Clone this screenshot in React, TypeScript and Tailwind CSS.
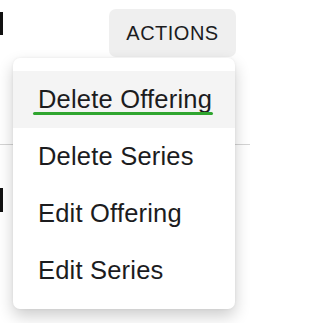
const items = ["Delete Offering", "Delete Series", "Edit Offering", "Edit Series"];

export default function App() {
  return (
    <div
      className="relative w-[250px] h-[323px] overflow-hidden bg-white text-[#1c1c1e]"
      style={{ fontFamily: '"Liberation Sans", Arial, sans-serif' }}
    >
      {/* page behind the menu */}
      <div className="flex items-start justify-between pt-[9px] pr-[14px]">
        <div className="mt-[3px] w-[3px] h-[23px] bg-[#111]" />
        <button className="w-[127px] h-[48px] rounded-[7px] bg-[#efefef] text-[20px] tracking-[0.5px] leading-none">
          ACTIONS
        </button>
      </div>
      <div className="mt-[87px] h-px bg-[#d4d4d4]" />
      <div className="mt-[43px] w-[3px] h-[24px] bg-[#111]" />

      {/* dropdown */}
      <div className="absolute left-[13px] top-[58px] w-[222px] pt-[13px] pb-[10px] rounded-[7px] bg-white shadow-[0_7px_16px_rgba(0,0,0,0.2),0_0_3px_rgba(0,0,0,0.06)]">
        {items.map((label, i) => (
          <div
            key={label}
            className={`relative h-[57px] flex items-center pl-[25px] text-[25.5px] tracking-[0.2px] leading-[29px] ${i === 0 ? "bg-[#f4f4f4]" : ""}`}
          >
            {label}
            {i === 0 && (
              <div className="absolute left-[20px] top-[41px] w-[180px] h-[2.5px] rounded-full bg-[#2fa52f]" />
            )}
          </div>
        ))}
      </div>
    </div>
  );
}
